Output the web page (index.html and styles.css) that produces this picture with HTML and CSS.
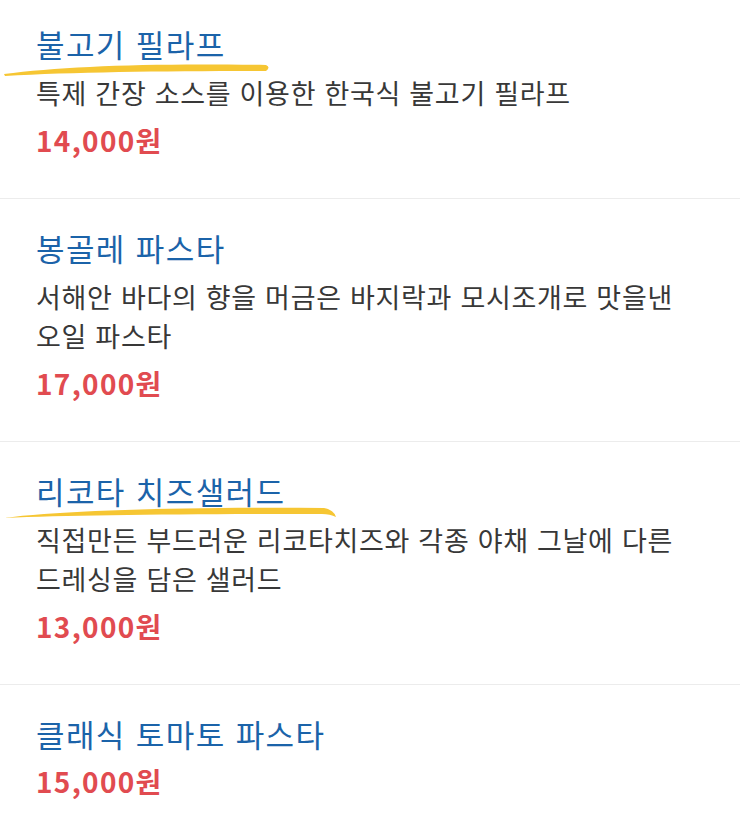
FILE: index.html
```html
<!DOCTYPE html>
<html lang="ko">
<head>
<meta charset="utf-8">
<link rel="stylesheet" href="styles.css">
</head>
<body>
<ul class="menu">
  <li class="item">
    <div class="title">
      <span class="title-text">불고기 필라프</span>
      <svg class="mark mark-1" width="266" height="15" viewBox="0 0 266 15" aria-hidden="true">
        <path d="M0 12 C 60 4, 150 1, 262 3 Q 267 5 262 9 C 160 9, 70 10, 1 14 Z" fill="#f6c633"/>
      </svg>
    </div>
    <p class="desc">특제 간장 소스를 이용한 한국식 불고기 필라프</p>
    <p class="price">14,000원</p>
  </li>
  <li class="item">
    <div class="title"><span class="title-text">봉골레 파스타</span></div>
    <p class="desc">서해안 바다의 향을 머금은 바지락과 모시조개로 맛을낸 오일 파스타</p>
    <p class="price">17,000원</p>
  </li>
  <li class="item">
    <div class="title">
      <span class="title-text">리코타 치즈샐러드</span>
      <svg class="mark mark-2" width="334" height="16" viewBox="0 0 334 16" aria-hidden="true">
        <path d="M0 13 C 60 5, 180 2, 320 3 Q 330 5 332 12 Q 326 9 318 9 C 180 9, 70 10, 0 13 Z" fill="#f6c633"/>
      </svg>
    </div>
    <p class="desc">직접만든 부드러운 리코타치즈와 각종 야채 그날에 다른 드레싱을 담은 샐러드</p>
    <p class="price">13,000원</p>
  </li>
  <li class="item">
    <div class="title"><span class="title-text">클래식 토마토 파스타</span></div>
    <p class="price">15,000원</p>
  </li>
</ul>
</body>
</html>
```
FILE: styles.css
```css
html, body {
  margin: 0;
  padding: 0;
  background: #ffffff;
}
body {
  font-family: "Noto Sans CJK KR", "Noto Sans", sans-serif;
  width: 740px;
  overflow: hidden;
}
.menu {
  list-style: none;
  margin: -5px 0 0 0;
  padding: 0;
}
.item {
  padding: 25px 30px 36px 36px;
  border-bottom: 1px solid #ececec;
  word-break: keep-all;
}
.item:last-child {
  border-bottom: none;
}
.title {
  position: relative;
  height: 48px;
  line-height: 48px;
  font-size: 31px;
  letter-spacing: 1.4px;
  color: #1b63a9;
  font-weight: 400;
}
.title-text {
  position: relative;
  z-index: 1;
}
.mark {
  position: absolute;
  left: -32px;
  z-index: 0;
}
.mark-1 { top: 42px; }
.mark-2 { top: 38px; }
.desc {
  margin: 5px 0 0 0;
  font-size: 27px;
  line-height: 39px;
  letter-spacing: 0.7px;
  color: #383838;
}
.price {
  margin: 6px 0 0 0;
  font-size: 28px;
  line-height: 44px;
  letter-spacing: 1.3px;
  font-weight: 700;
  color: #e14b50;
}
.title + .price {
  margin-top: 1px;
}
```
